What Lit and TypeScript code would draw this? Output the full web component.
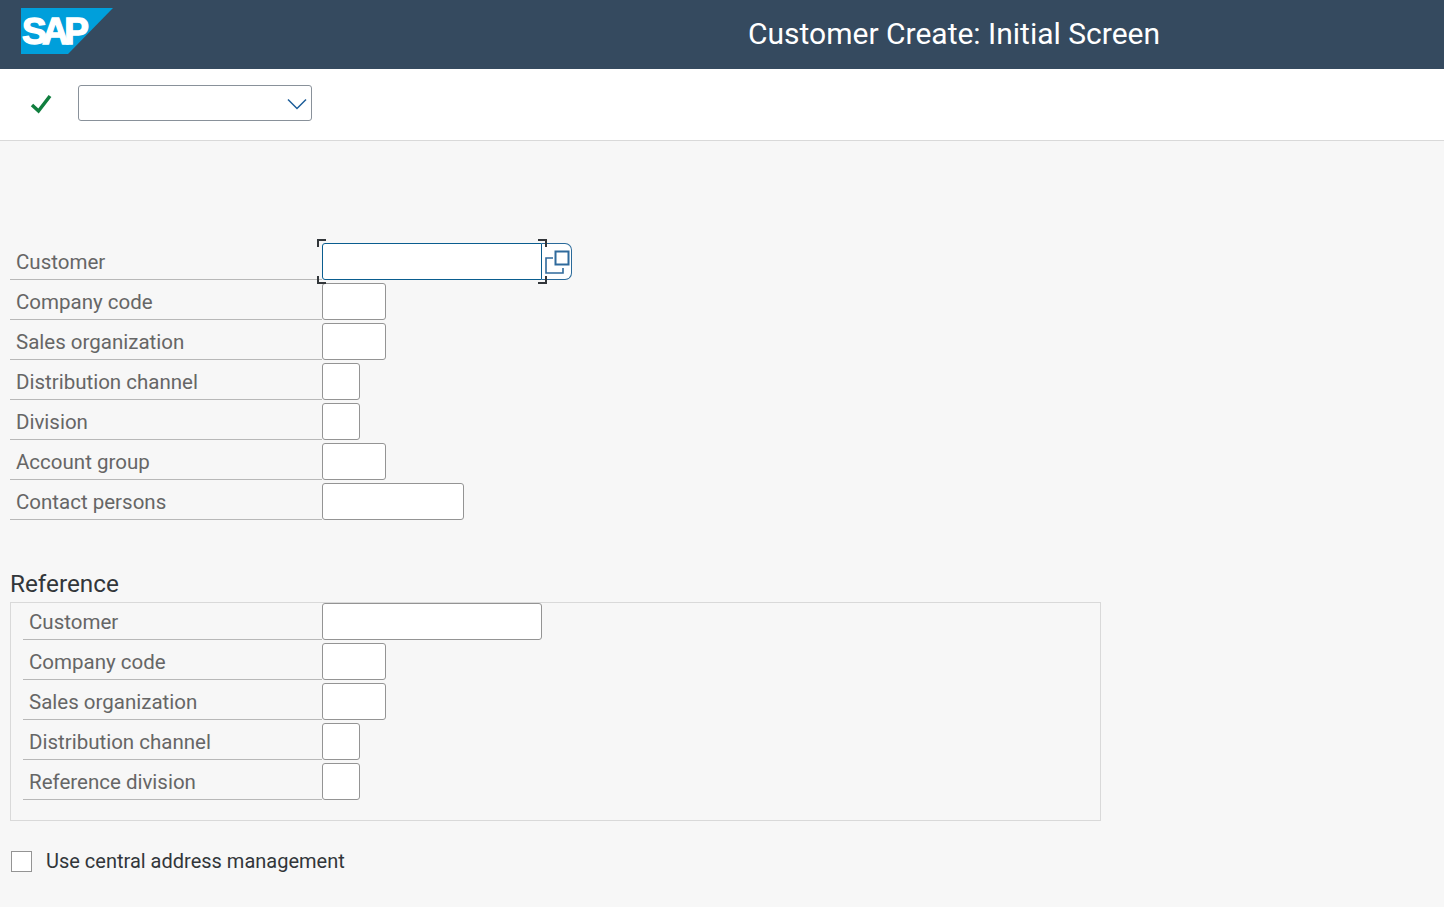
import { css, html, LitElement } from 'lit';
import { customElement } from 'lit/decorators.js';

type Field = { label: string; width: number };

const mainFields: Field[] = [
  { label: 'Company code', width: 64 },
  { label: 'Sales organization', width: 64 },
  { label: 'Distribution channel', width: 38 },
  { label: 'Division', width: 38 },
  { label: 'Account group', width: 64 },
  { label: 'Contact persons', width: 142 },
];

const refFields: Field[] = [
  { label: 'Customer', width: 220 },
  { label: 'Company code', width: 64 },
  { label: 'Sales organization', width: 64 },
  { label: 'Distribution channel', width: 38 },
  { label: 'Reference division', width: 38 },
];

@customElement('app-root')
export class AppRoot extends LitElement {
  static styles = css`
    :host {
      display: block;
      height: 907px;
      overflow: hidden;
      background: #f7f7f7;
      font-family: Roboto, "Noto Sans", sans-serif;
    }
    .header {
      display: flex;
      align-items: center;
      height: 69px;
      background: #354a5f;
      padding-left: 21px;
      box-sizing: border-box;
    }
    .logo {
      display: block;
      flex: none;
      margin-top: -7px;
    }
    .logo text {
      font-family: "Liberation Sans", Arial, sans-serif;
      font-weight: 700;
      font-size: 37px;
      letter-spacing: -4.6px;
      fill: #fff;
      stroke: #fff;
      stroke-width: 1.4px;
    }
    .title {
      margin-left: 635px;
      margin-top: -2px;
      color: #fff;
      font-size: 30px;
      white-space: nowrap;
    }
    .toolbar {
      display: flex;
      align-items: center;
      height: 72px;
      box-sizing: border-box;
      background: #fff;
      border-bottom: 1px solid #d9d9d9;
      padding-left: 30px;
    }
    .check {
      display: block;
      flex: none;
      margin-top: -2px;
    }
    .combo {
      display: flex;
      align-items: center;
      justify-content: flex-end;
      width: 234px;
      height: 36px;
      box-sizing: border-box;
      margin-left: 26px;
      margin-top: -4px;
      padding: 2px 4px 0 0;
      background: #fff;
      border: 1px solid #89919a;
      border-radius: 3px;
    }
    .main {
      padding: 99px 0 0 10px;
    }
    .row {
      display: flex;
      align-items: flex-end;
      height: 40px;
    }
    .label {
      box-sizing: border-box;
      width: 312px;
      height: 100%;
      padding: 10px 0 0 6px;
      flex: none;
      border-bottom: 1px solid #b8b8b8;
      color: #666;
      font-size: 20.5px;
      line-height: 24px;
      white-space: nowrap;
    }
    .input {
      box-sizing: border-box;
      height: 37px;
      flex: none;
      background: #fff;
      border: 1px solid #949494;
      border-radius: 3px;
    }
    .focus-wrap {
      position: relative;
      display: flex;
      flex: none;
    }
    .input.focused {
      border-color: #0a5d8f;
      border-radius: 3px 0 0 3px;
    }
    .help {
      display: flex;
      align-items: center;
      justify-content: center;
      box-sizing: border-box;
      width: 30px;
      height: 37px;
      background: #fff;
      border: 1px solid #2a6a9a;
      border-left: none;
      border-radius: 0 7px 7px 0;
    }
    .corner {
      position: absolute;
      box-sizing: border-box;
      width: 9px;
      height: 8px;
      border: 0 solid #32363a;
    }
    .tl { left: -5px; top: -4px; border-width: 2px 0 0 2px; }
    .tr { left: 216px; top: -4px; border-width: 2px 2px 0 0; }
    .bl { left: -5px; top: 33px; border-width: 0 0 2px 2px; }
    .br { left: 216px; top: 33px; border-width: 0 2px 2px 0; }
    .section {
      margin: 45px 0 0;
      height: 37px;
      color: #32363a;
      font-size: 24.3px;
      line-height: 38px;
      font-weight: 400;
    }
    .group {
      box-sizing: border-box;
      width: 1091px;
      height: 219px;
      border: 1px solid #d9d9d9;
      padding-left: 12px;
    }
    .group .row:first-child {
      height: 37px;
    }
    .group .row:first-child .label {
      padding-top: 7px;
    }
    .group .label {
      width: 299px;
    }
    .option {
      display: flex;
      align-items: center;
      margin-top: 28px;
      padding-left: 1px;
      color: #32363a;
      font-size: 20px;
    }
    .box {
      box-sizing: border-box;
      flex: none;
      width: 21px;
      height: 21px;
      margin-right: 14px;
      background: #fff;
      border: 1px solid #949494;
    }
  `;

  private renderRow(f: Field) {
    return html`
      <div class="row">
        <div class="label">${f.label}</div>
        <div class="input" style="width:${f.width}px"></div>
      </div>
    `;
  }

  render() {
    return html`
      <div class="header">
        <svg class="logo" width="92" height="46" viewBox="0 0 92 46">
          <polygon points="0,0 92,0 47,46 0,46" fill="#009fdb"></polygon>
          <text x="1" y="36">SAP</text>
        </svg>
        <div class="title">Customer Create: Initial Screen</div>
      </div>
      <div class="toolbar">
        <svg class="check" width="22" height="20" viewBox="0 0 22 20">
          <path d="M2 11 L8.5 17 L20 2" fill="none" stroke="#107e3e" stroke-width="3.5"></path>
        </svg>
        <div class="combo">
          <svg width="20" height="12" viewBox="0 0 20 12">
            <path d="M1 1.5 L10 10.5 L19 1.5" fill="none" stroke="#1d5d99" stroke-width="1.5"></path>
          </svg>
        </div>
      </div>
      <div class="main">
        <div class="row">
          <div class="label">Customer</div>
          <div class="focus-wrap">
            <div class="input focused" style="width:220px"></div>
            <div class="help">
              <svg width="26" height="28" viewBox="0 0 26 28">
                <rect x="11.5" y="3.5" width="13" height="13" fill="none" stroke="#2f6a9c" stroke-width="2"></rect>
                <path d="M9 10 H2 V25 H19 V20" fill="none" stroke="#2f6a9c" stroke-width="1.6"></path>
              </svg>
            </div>
            <span class="corner tl"></span>
            <span class="corner tr"></span>
            <span class="corner bl"></span>
            <span class="corner br"></span>
          </div>
        </div>
        ${mainFields.map((f) => this.renderRow(f))}
        <h2 class="section">Reference</h2>
        <div class="group">
          ${refFields.map((f) => this.renderRow(f))}
        </div>
        <div class="option">
          <span class="box"></span>
          <span>Use central address management</span>
        </div>
      </div>
    `;
  }
}
